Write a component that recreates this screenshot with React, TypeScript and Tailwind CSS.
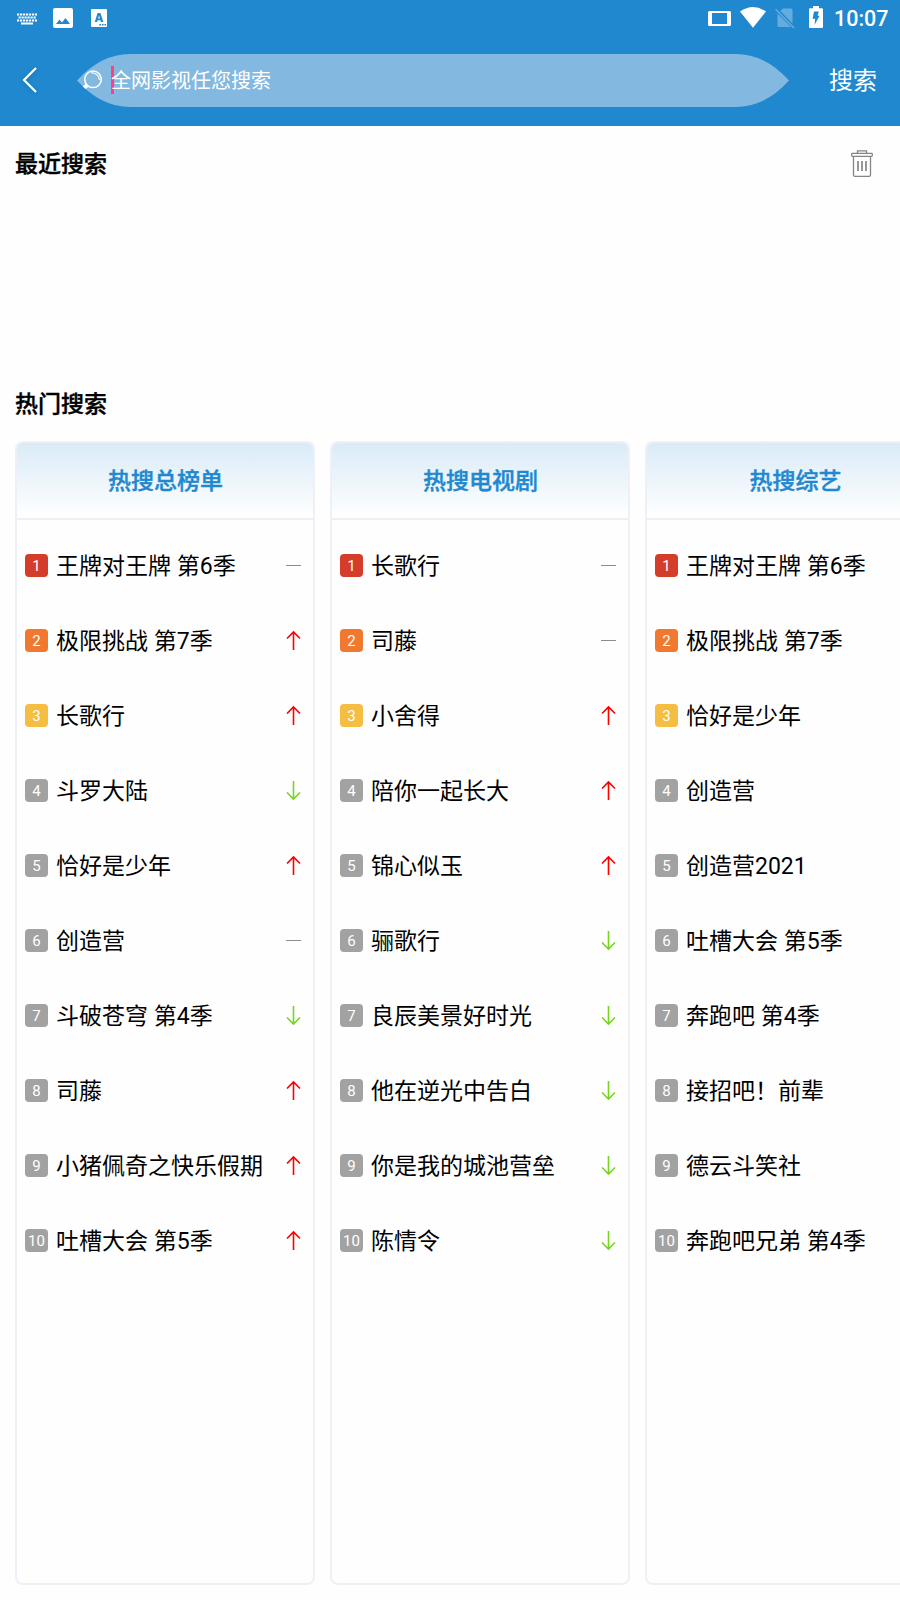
type Trend = 'up' | 'down' | 'same'

interface Entry {
  title: string
  trend?: Trend
}

interface Board {
  name: string
  entries: Entry[]
}

const BOARDS: Board[] = [
  {
    name: '热搜总榜单',
    entries: [
      { title: '王牌对王牌 第6季', trend: 'same' },
      { title: '极限挑战 第7季', trend: 'up' },
      { title: '长歌行', trend: 'up' },
      { title: '斗罗大陆', trend: 'down' },
      { title: '恰好是少年', trend: 'up' },
      { title: '创造营', trend: 'same' },
      { title: '斗破苍穹 第4季', trend: 'down' },
      { title: '司藤', trend: 'up' },
      { title: '小猪佩奇之快乐假期', trend: 'up' },
      { title: '吐槽大会 第5季', trend: 'up' },
    ],
  },
  {
    name: '热搜电视剧',
    entries: [
      { title: '长歌行', trend: 'same' },
      { title: '司藤', trend: 'same' },
      { title: '小舍得', trend: 'up' },
      { title: '陪你一起长大', trend: 'up' },
      { title: '锦心似玉', trend: 'up' },
      { title: '骊歌行', trend: 'down' },
      { title: '良辰美景好时光', trend: 'down' },
      { title: '他在逆光中告白', trend: 'down' },
      { title: '你是我的城池营垒', trend: 'down' },
      { title: '陈情令', trend: 'down' },
    ],
  },
  {
    name: '热搜综艺',
    entries: [
      { title: '王牌对王牌 第6季' },
      { title: '极限挑战 第7季' },
      { title: '恰好是少年' },
      { title: '创造营' },
      { title: '创造营2021' },
      { title: '吐槽大会 第5季' },
      { title: '奔跑吧 第4季' },
      { title: '接招吧！前辈' },
      { title: '德云斗笑社' },
      { title: '奔跑吧兄弟 第4季' },
    ],
  },
]

const BADGE_COLORS = ['bg-[#d43d2a]', 'bg-[#f0792f]', 'bg-[#f5bd42]']

function TrendIcon({ trend }: { trend: Trend }) {
  if (trend === 'same') {
    return <span className="w-[15px] h-px bg-[#8c8c8c]" />
  }
  return (
    <svg
      width="15"
      height="21"
      viewBox="0 0 15 21"
      fill="none"
      strokeWidth="1.6"
      className={trend === 'up' ? 'stroke-[#ff0000]' : 'stroke-[#79d420] rotate-180'}
    >
      <path d="M7.5 20V1.8M1 8.5L7.5 2L14 8.5" />
    </svg>
  )
}

function StatusBar() {
  return (
    <div className="h-9 flex items-center justify-between pl-[17px] pr-[12px]">
      <div className="flex items-center">
        {/* Keyboard */}
        <svg width="20" height="12" viewBox="0 0 20 12" fill="none" stroke="#fff" className="mr-4 mt-px">
          <path d="M0 1.5H20M0 7.5H20" strokeWidth="2" strokeDasharray="2.2 0.8" />
          <path d="M1.5 4.5H19" strokeWidth="2" strokeDasharray="2.2 0.8" />
          <path d="M4 10.5H16" strokeWidth="2" />
        </svg>
        {/* Picture */}
        <svg width="20" height="20" viewBox="0 0 20 20" className="mr-[18px]">
          <rect width="20" height="20" rx="2" fill="#fff" />
          <path d="M3 16L6.5 11.5L9 14.5L12.5 10L17 16Z" fill="#2088cf" />
        </svg>
        <div className="w-4 h-[18px] bg-white rounded-[1px]">
          <svg width="16" height="18" viewBox="0 0 16 18" fill="#2088cf">
            <path fillRule="evenodd" d="M6.6 4H9.4L12.4 13H10L9.4 11.2H6.6L6 13H3.8ZM8 6.4L7.1 9.5H8.9Z" />
            <path d="M8.3 15H10V16.6H8.3ZM10.9 15H12.6V16.6H10.9ZM13.5 15H15V16.6H13.5Z" />
          </svg>
        </div>
      </div>
      <div className="flex items-center">
        {/* Tablet */}
        <svg width="23" height="15" viewBox="0 0 23 15" className="mr-[9px] mt-px">
          <path fill="#fff" fillRule="evenodd" d="M1.5 0H21.5Q23 0 23 1.5V13.5Q23 15 21.5 15H1.5Q0 15 0 13.5V1.5Q0 0 1.5 0ZM4 2V13H19V2Z" />
        </svg>
        {/* Wifi */}
        <svg width="26" height="21" viewBox="0 0 26 21" fill="#fff" className="mr-[9px] -mt-px">
          <path d="M0 4.6Q13 -4.6 26 4.6L13 20.7Z" />
        </svg>
        {/* No SIM */}
        <svg width="20" height="21" viewBox="0 0 20 21" className="mr-[14px] opacity-30">
          <path fill="#fff" d="M8 0.5H16Q17.5 0.5 17.5 2V15.4L5.4 3.1ZM2.5 5.5L16 19H4Q2.5 19 2.5 17.5Z" />
          <path d="M0.6 1.2L19 20" stroke="#fff" strokeWidth="1.5" />
        </svg>
        {/* Charging battery */}
        <svg width="14" height="22" viewBox="0 0 14 22" className="mr-[11px] -mt-[2px]">
          <path fill="#fff" d="M4 0H10V2.2H13Q14 2.2 14 3.2V21Q14 22 13 22H1Q0 22 0 21V3.2Q0 2.2 1 2.2H4Z" />
          <path fill="#2088cf" d="M5 5.5H9.8L8.6 9.8H10.6L5.6 18.8L6.2 12.8H3.6Z" />
        </svg>
        <span className="w-[54px] pt-[2px] text-[21.5px] leading-none font-medium">10:07</span>
      </div>
    </div>
  )
}

function SearchBar() {
  return (
    <div className="h-[90px] flex items-center pl-[22px] pr-[23px] pb-[1px]">
      <svg width="16" height="26" viewBox="0 0 16 26" fill="none" stroke="#fff" strokeWidth="2.2" className="-mt-[1px] drop-shadow-sm">
        <path d="M14 1L2 13L14 25" />
      </svg>
      <div className="ml-[39px] w-[712px] h-[53px] flex items-center bg-[#83b9e1] [clip-path:path('M0_26.5Q24_0_53_0H659Q688_0_712_26.5Q688_53_659_53H53Q24_53_0_26.5Z')]">
        <svg width="20" height="20" viewBox="0 0 20 20" fill="none" stroke="#fff" className="ml-[5px] mr-px -mt-[2px]">
          <circle cx="11" cy="9.3" r="8.3" strokeWidth="1.5" />
          <path d="M9 2.8Q16.2 2.6 17.4 10" strokeWidth="1.1" />
          <path d="M1.6 18.2L5.6 14.8" strokeWidth="4" />
        </svg>
        <span className="ml-[8px] w-[3px] h-7 -mt-px bg-[#ff4081]" />
        <span className="-ml-[3px] relative text-[20px] leading-none">全网影视任您搜索</span>
      </div>
      <span className="ml-auto text-[24px] leading-none">搜索</span>
    </div>
  )
}

function BoardCard({ board }: { board: Board }) {
  return (
    <div className="w-[300px] h-[1144px] shrink-0 border-2 border-[#efeff6] rounded-lg overflow-hidden">
      <div className="h-[77px] pt-[3px] pl-px flex items-center justify-center border-b-2 border-[#efeff6] bg-linear-to-b from-[#daebf7] to-white text-[23px] font-medium text-[#2088cf] [-webkit-text-stroke:0.4px]">
        {board.name}
      </div>
      <div className="pt-2">
        {board.entries.map((entry, i) => (
          <div key={i} className="h-[75px] flex items-center pl-2 pr-3">
            <span className={`size-[23px] shrink-0 rounded flex items-center justify-center pt-px text-[15px] leading-none text-white ${BADGE_COLORS[i] ?? 'bg-[#a2a2a2]'}`}>
              {i + 1}
            </span>
            <span className="ml-2 pt-[3px] flex-1 whitespace-nowrap text-[23px] text-black">{entry.title}</span>
            {entry.trend && <TrendIcon trend={entry.trend} />}
          </div>
        ))}
      </div>
    </div>
  )
}

export default function App() {
  return (
    <div className="w-full h-[1600px] overflow-hidden bg-[#fefefe] text-black font-[Roboto,'Noto_Sans_CJK_SC',sans-serif]">
      <header className="bg-[#2088cf] text-white">
        <StatusBar />
        <SearchBar />
      </header>

      {/* Recent searches */}
      <div className="h-[75px] flex items-center justify-between pl-[15px] pr-[27px]">
        <h2 className="pt-[3px] text-[23px] font-medium [-webkit-text-stroke:0.4px]">最近搜索</h2>
        <svg width="22" height="27" viewBox="0 0 22 27" fill="none" stroke="#858585" strokeWidth="1.3">
          <path d="M6.5 3V0.8H15.5V3" />
          <rect x="0.7" y="3.3" width="20.6" height="3" rx="0.8" />
          <path d="M2.5 6.5V25Q2.5 26.3 4 26.3H18Q19.5 26.3 19.5 25V6.5" />
          <path d="M7 11V21M11 11V21M15 11V21" strokeWidth="1.7" />
        </svg>
      </div>

      {/* Hot searches */}
      <div className="mt-[165px] h-[75px] flex items-center pl-[15px]">
        <h2 className="pt-[3px] text-[23px] font-medium [-webkit-text-stroke:0.4px]">热门搜索</h2>
      </div>
      <div className="flex gap-[15px] pl-[15px] overflow-hidden">
        {BOARDS.map(board => <BoardCard key={board.name} board={board} />)}
      </div>
    </div>
  )
}
